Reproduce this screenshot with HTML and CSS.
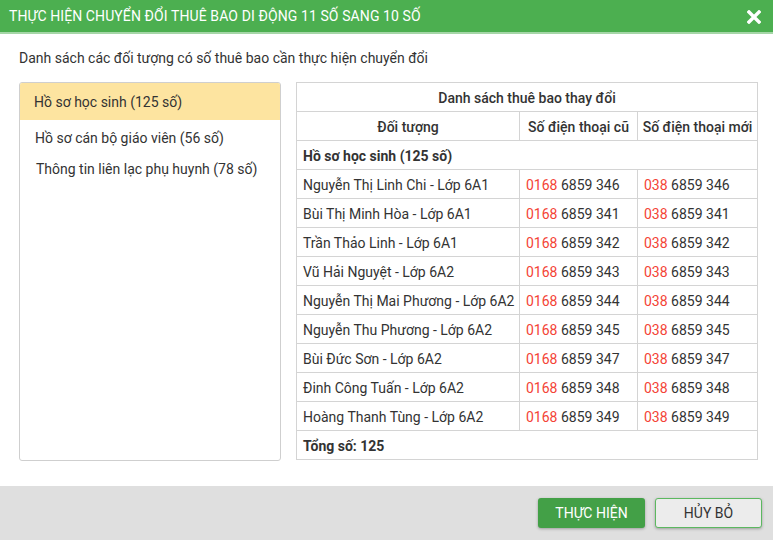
FILE: index.html
```html
<!DOCTYPE html>
<html lang="vi">
<head>
<meta charset="utf-8">
<link rel="stylesheet" href="styles.css">
</head>
<body>
<div class="dialog">
  <div class="header">
    <span class="title">THỰC HIỆN CHUYỂN ĐỔI THUÊ BAO DI ĐỘNG 11 SỐ SANG 10 SỐ</span>
    <svg class="close" width="14" height="14" viewBox="0 0 14 14"><path d="M2 2 L12 12 M12 2 L2 12" stroke="#fff" stroke-width="3.4" stroke-linecap="square"/></svg>
  </div>
  <div class="body">
    <div class="intro">Danh sách các đối tượng có số thuê bao cần thực hiện chuyển đổi</div>
    <div class="content">
      <div class="list">
        <div class="item active">Hồ sơ học sinh (125 số)</div>
        <div class="item i2">Hồ sơ cán bộ giáo viên (56 số)</div>
        <div class="item i3">Thông tin liên lạc phụ huynh (78 số)</div>
      </div>
      <table class="grid">
        <colgroup><col class="c1"><col class="c2"><col class="c3"></colgroup>
        <tr><th colspan="3" class="cap">Danh sách thuê bao thay đổi</th></tr>
        <tr><th>Đối tượng</th><th>Số điện thoại cũ</th><th>Số điện thoại mới</th></tr>
        <tr><td colspan="3" class="group">Hồ sơ học sinh (125 số)</td></tr>
        <tr><td>Nguyễn Thị Linh Chi - Lớp 6A1</td><td><span class="red">0168</span> 6859 346</td><td><span class="red">038</span> 6859 346</td></tr>
        <tr><td>Bùi Thị Minh Hòa - Lớp 6A1</td><td><span class="red">0168</span> 6859 341</td><td><span class="red">038</span> 6859 341</td></tr>
        <tr><td>Trần Thảo Linh - Lớp 6A1</td><td><span class="red">0168</span> 6859 342</td><td><span class="red">038</span> 6859 342</td></tr>
        <tr><td>Vũ Hải Nguyệt - Lớp 6A2</td><td><span class="red">0168</span> 6859 343</td><td><span class="red">038</span> 6859 343</td></tr>
        <tr><td>Nguyễn Thị Mai Phương - Lớp 6A2</td><td><span class="red">0168</span> 6859 344</td><td><span class="red">038</span> 6859 344</td></tr>
        <tr><td>Nguyễn Thu Phương - Lớp 6A2</td><td><span class="red">0168</span> 6859 345</td><td><span class="red">038</span> 6859 345</td></tr>
        <tr><td>Bùi Đức Sơn - Lớp 6A2</td><td><span class="red">0168</span> 6859 347</td><td><span class="red">038</span> 6859 347</td></tr>
        <tr><td>Đinh Công Tuấn - Lớp 6A2</td><td><span class="red">0168</span> 6859 348</td><td><span class="red">038</span> 6859 348</td></tr>
        <tr><td>Hoàng Thanh Tùng - Lớp 6A2</td><td><span class="red">0168</span> 6859 349</td><td><span class="red">038</span> 6859 349</td></tr>
        <tr><td colspan="3" class="group">Tổng số: 125</td></tr>
      </table>
    </div>
  </div>
  <div class="footer">
    <button class="btn primary">THỰC HIỆN</button>
    <button class="btn secondary">HỦY BỎ</button>
  </div>
</div>
</body>
</html>
```
FILE: styles.css
```css
html, body {
  margin: 0;
  padding: 0;
  background: #fff;
}
body {
  font-family: Roboto, "Noto Sans", sans-serif;
  color: #333;
  font-size: 14px;
}
.dialog {
  width: 773px;
  height: 540px;
  display: flex;
  flex-direction: column;
}
.header {
  height: 32px;
  background: #4caf50;
  border-bottom: 2px solid #a5d6a7;
  display: flex;
  align-items: center;
  justify-content: space-between;
  padding: 0 12px 0 9px;
  color: #fff;
  flex: none;
}
.title {
  font-size: 14px;
  letter-spacing: 0.1px;
}
.close {
  display: block;
  margin-top: 1px;
}
.body {
  flex: 1;
  padding: 15px 17px 0 19px;
}
.intro {
  font-size: 14px;
  line-height: 18px;
  height: 18px;
  color: #333;
}
.content {
  margin-top: 15px;
  display: flex;
  gap: 15px;
  align-items: flex-start;
}
.list {
  width: 260px;
  height: 377px;
  border: 1px solid #cfcfcf;
  border-radius: 3px;
  overflow: hidden;
  flex: none;
}
.item {
  height: 32px;
  line-height: 32px;
  padding-left: 14px;
  font-size: 14px;
  color: #333;
}
.item.active {
  background: #fde4a0;
  height: 37px;
  line-height: 38px;
}
.item.i2 { padding-left: 15px; height: 32px; line-height: 36px; }
.item.i3 { padding-left: 16px; line-height: 35px; }
.grid {
  border-collapse: collapse;
  width: 461px;
  table-layout: fixed;
  font-size: 14px;
}
.grid .c1 { width: 223px; }
.grid .c2 { width: 118px; }
.grid .c3 { width: 120px; }
.grid tr { height: 29px; }
.grid th, .grid td {
  border: 1px solid #d4d4d4;
  padding: 1px 0 0 6px;
  text-align: left;
  white-space: nowrap;
  overflow: hidden;
  color: #333;
}
.grid th {
  font-weight: 500;
  text-align: center;
  padding: 1px 0 0 0;
}
.grid td.group {
  font-weight: 700;
}
.red { color: #f44336; }
.footer {
  flex: none;
  height: 54px;
  background: #dfdfdf;
  display: flex;
  justify-content: flex-end;
  align-items: center;
  gap: 10px;
  padding: 0 11px 0 0;
}
.btn {
  width: 107px;
  height: 30px;
  font-family: Roboto, "Noto Sans", sans-serif;
  font-size: 14px;
  border-radius: 3px;
  cursor: pointer;
  box-shadow: 0 1px 3px rgba(0,0,0,0.3);
}
.primary {
  background: #43a047;
  color: #fff;
  border: none;
}
.secondary {
  background: #ececec;
  color: #333;
  border: 1px solid #5cb860;
}
```
